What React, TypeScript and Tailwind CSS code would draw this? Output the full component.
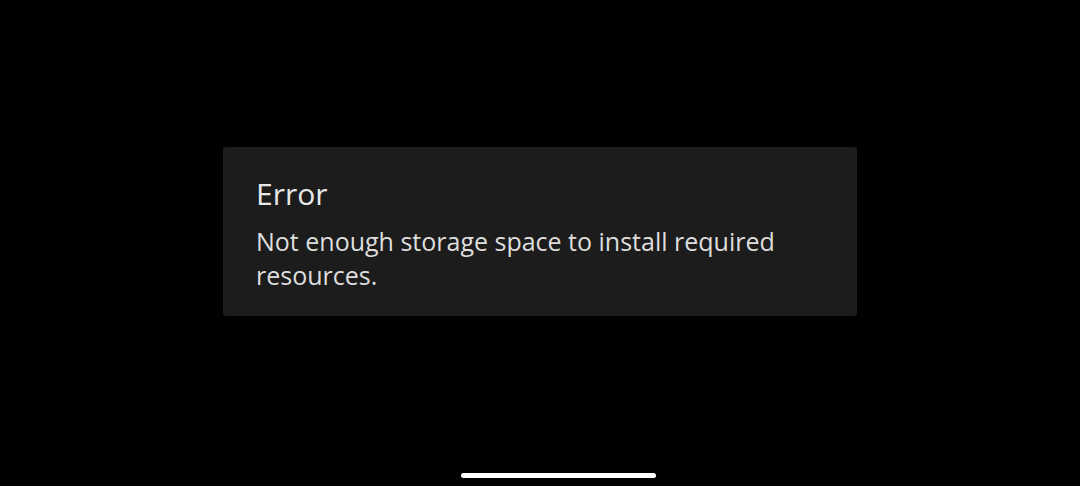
const App = () => {
  return (
    <div className="relative flex h-[486px] w-[1080px] flex-col items-center bg-black pt-[147px] font-['Open_Sans',sans-serif]">
      <div className="h-[169px] w-[634px] rounded-[3px] bg-[#1c1c1c] px-[33px] pt-[27px]">
        <h1 className="text-[30px] leading-[40px] text-[#e8e8e8]">Error</h1>
        <p className="mt-[10px] text-[25px] leading-[34px] text-[#dedede]">
          Not enough storage space to install required resources.
        </p>
      </div>
      <div className="absolute bottom-[8px] left-[461px] h-[5px] w-[195px] rounded-full bg-white" />
    </div>
  );
};

export default App;
